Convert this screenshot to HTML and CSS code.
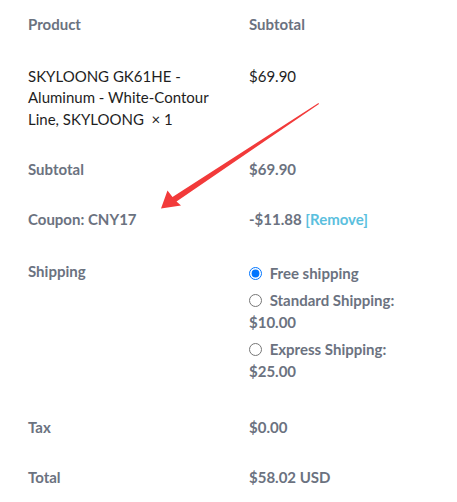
FILE: index.html
```html
<!DOCTYPE html>
<html lang="en">
<head>
<meta charset="utf-8">
<title>Order review</title>
<link rel="stylesheet" href="styles.css">
</head>
<body>
<div class="review">
  <table class="order">
    <thead>
      <tr class="row-head">
        <th class="col-label">Product</th>
        <th class="col-value">Subtotal</th>
      </tr>
    </thead>
    <tbody>
      <tr class="row-item">
        <td class="col-label item-name">SKYLOONG GK61HE - Aluminum - White-Contour Line, SKYLOONG&nbsp;&nbsp;×&nbsp;1</td>
        <td class="col-value item-price">$69.90</td>
      </tr>
    </tbody>
    <tfoot>
      <tr class="row-total">
        <th class="col-label">Subtotal</th>
        <td class="col-value">$69.90</td>
      </tr>
      <tr class="row-total">
        <th class="col-label">Coupon: CNY17</th>
        <td class="col-value">-$11.88 <a class="remove" href="#">[Remove]</a></td>
      </tr>
      <tr class="row-shipping">
        <th class="col-label">Shipping</th>
        <td class="col-value">
          <ul class="methods">
            <li><label><input type="radio" name="ship" checked> Free shipping</label></li>
            <li><label><input type="radio" name="ship"> Standard Shipping: $10.00</label></li>
            <li><label><input type="radio" name="ship"> Express Shipping: $25.00</label></li>
          </ul>
        </td>
      </tr>
      <tr class="row-total">
        <th class="col-label">Tax</th>
        <td class="col-value">$0.00</td>
      </tr>
      <tr class="row-total">
        <th class="col-label">Total</th>
        <td class="col-value">$58.02 USD</td>
      </tr>
    </tfoot>
  </table>
  <svg class="arrow" width="457" height="502" viewBox="0 0 457 502" aria-hidden="true">
    <polygon points="318.5,103 319,104 176.5,201.5 181,205.5 161,208.5 167.5,190.5 172.5,197" fill="#f23a3a"/>
  </svg>
</div>
</body>
</html>
```

FILE: styles.css
```css
html, body {
  margin: 0;
  padding: 0;
  background: #ffffff;
}

body {
  font-family: Lato, "Noto Sans", sans-serif;
  font-size: 15px;
  line-height: 21.5px;
  color: #6b7280;
}

.review {
  position: relative;
  width: 457px;
  height: 502px;
  overflow: hidden;
}

.order {
  border-collapse: collapse;
  border-spacing: 0;
  width: 457px;
}

.order th,
.order td {
  text-align: left;
  vertical-align: top;
  padding: 14.25px 0;
  font-weight: 700;
}

.col-label {
  width: 193px;
  padding-left: 28px !important;
  padding-right: 28px !important;
}

.row-head th {
  padding-top: 13.5px;
  padding-bottom: 15px;
}

.row-item td {
  padding-top: 15.5px;
  padding-bottom: 14.5px;
  font-weight: 400;
  color: #1e1e1e;
}

.remove {
  color: #5bc0de;
  text-decoration: none;
}

.row-shipping th {
  padding-top: 16.25px;
  padding-bottom: 20px;
}

.row-shipping td {
  padding-top: 18.25px;
  padding-bottom: 20px;
}

.methods {
  list-style: none;
  margin: 0;
  padding: 0;
  width: 170px;
}

.methods li {
  margin: 0 0 6px;
}

.methods li:last-child {
  margin-bottom: 0;
}

.methods input {
  margin: 0 4px 0 0;
  width: 13px;
  height: 13px;
  vertical-align: -1px;
}

.arrow {
  position: absolute;
  left: 0;
  top: 0;
  pointer-events: none;
}
```
